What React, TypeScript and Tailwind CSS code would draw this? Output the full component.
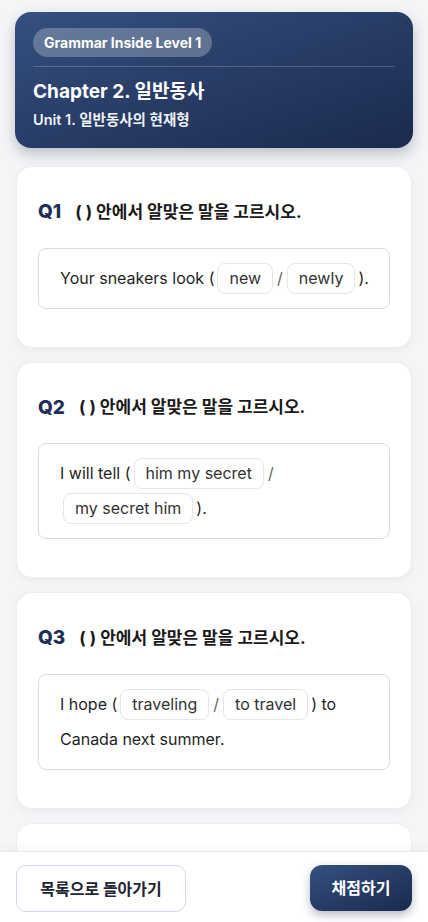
const questions = [
  {
    id: 1,
    parts: ["Your sneakers look (", { a: "new", b: "newly" }, ")."],
  },
  {
    id: 2,
    parts: ["I will tell (", { a: "him my secret", b: "my secret him" }, ")."],
  },
  {
    id: 3,
    parts: ["I hope (", { a: "traveling", b: "to travel" }, ") to Canada next summer."],
  },
];

type Choice = { a: string; b: string };

function Chip({ label }: { label: string }) {
  return (
    <span className="mx-[3px] inline-block rounded-lg border border-[#e2e5ea] bg-white px-[11px] leading-[29px] text-[#333]">
      {label}
    </span>
  );
}

function QuestionCard({ id, parts }: { id: number; parts: (string | Choice)[] }) {
  return (
    <div className="rounded-2xl border border-[#eceef1] bg-white px-[21px] pt-[31px] pb-[38px] shadow-[0_2px_8px_rgba(0,0,0,0.05)]">
      <div className="flex items-center gap-[14px]">
        <span className="text-[19px] font-extrabold text-[#1e2f57]">Q{id}</span>
        <span className="text-[17px] font-bold text-[#1a1a1a]">( ) 안에서 알맞은 말을 고르시오.</span>
      </div>
      <div className="mt-[21px] rounded-lg border border-[#d6dce6] py-[12px] pl-[21px] pr-[10px] text-[16px] leading-[35px] text-[#1f1f1f]">
        {parts.map((p, i) =>
          typeof p === "string" ? (
            <span key={i}>{p}</span>
          ) : (
            <span key={i}>
              <Chip label={p.a} />
              <span className="mx-[1px] text-[#666]">/</span>
              <Chip label={p.b} />
            </span>
          )
        )}
      </div>
    </div>
  );
}

export default function App() {
  return (
    <div
      className="flex h-screen flex-col overflow-hidden bg-[#f4f5f7]"
      style={{ fontFamily: 'Inter, "Noto Sans CJK KR", sans-serif' }}
    >
      <main className="flex flex-1 flex-col gap-[14px] overflow-hidden px-[16px] pt-[12px]">
        {/* HEADER */}
        <div className="-mx-[1px] mb-[4px] shrink-0 rounded-2xl bg-gradient-to-br from-[#35507f] to-[#1b2a4e] px-[18px] pt-[16px] pb-[18px] text-white shadow-[0_6px_14px_rgba(20,30,60,0.25)]">
          <span className="inline-block rounded-full bg-white/25 px-[11px] py-[5px] text-[14px] font-bold leading-[19px]">
            Grammar Inside Level 1
          </span>
          <div className="mt-[9px] h-px bg-white/20" />
          <h1 className="mt-[12px] text-[19px] font-bold leading-[26px]">Chapter 2. 일반동사</h1>
          <p className="mt-[5px] text-[14.5px] font-semibold leading-[20px] text-white/95">
            Unit 1. 일반동사의 현재형
          </p>
        </div>

        {questions.map((q) => (
          <div key={q.id} className="shrink-0">
            <QuestionCard id={q.id} parts={q.parts as (string | Choice)[]} />
          </div>
        ))}

        <div className="h-[120px] shrink-0 rounded-2xl border border-[#eceef1] bg-white" />
      </main>

      {/* FOOTER */}
      <footer className="flex h-[71px] shrink-0 items-start justify-between border-t border-[#e8eaee] bg-white px-[16px] pt-[13px] shadow-[0_-4px_10px_rgba(0,0,0,0.03)]">
        <button className="h-[47px] w-[170px] rounded-[10px] border-[1.5px] border-[#cfd8e8] bg-white text-[16px] font-bold text-[#1e2533]">
          목록으로 돌아가기
        </button>
        <button className="h-[46px] w-[102px] rounded-xl bg-gradient-to-br from-[#35507f] to-[#1b2a4e] text-[16px] font-bold text-white shadow-[0_4px_10px_rgba(20,30,60,0.3)]">
          채점하기
        </button>
      </footer>
    </div>
  );
}
